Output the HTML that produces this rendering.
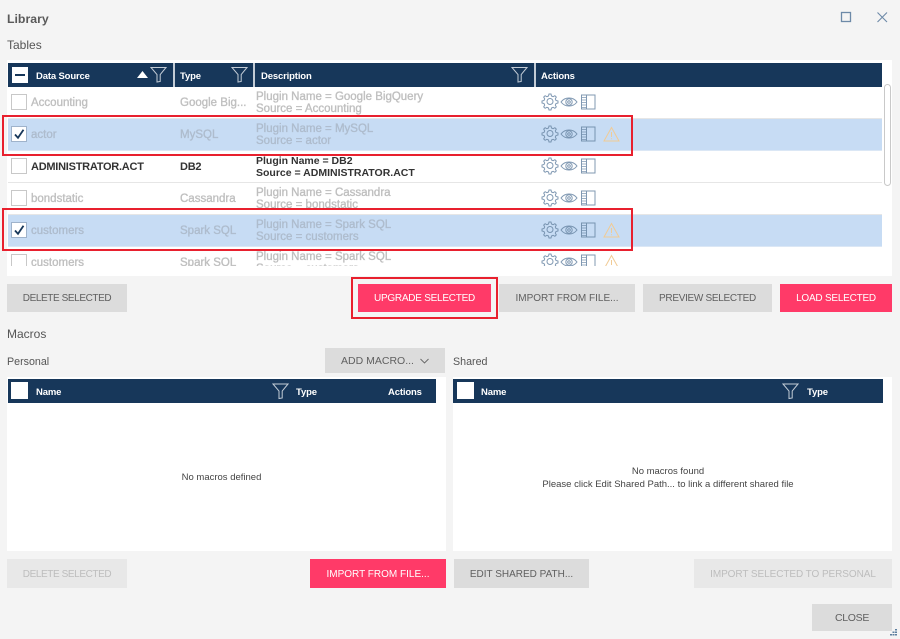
<!DOCTYPE html>
<html><head><meta charset="utf-8"><title>Library</title>
<style>
html,body{margin:0;padding:0}
html{background:#f4f4f4}
body{width:900px;height:639px;overflow:hidden;background:#f4f4f4;position:relative;font-family:"Liberation Sans",sans-serif;color:#555;filter:blur(.3px)}
.a{position:absolute;white-space:nowrap}
.p{position:absolute;background:#fff}
.hd{position:absolute;background:#17375a;height:24px}
.ht{position:absolute;color:#fff;font-weight:bold;font-size:9.5px;line-height:24px;white-space:nowrap;top:1.5px;letter-spacing:-.15px}
.sep{position:absolute;top:0;width:2px;height:24px;background:#c3ccd6}
.btn{position:absolute;display:flex;align-items:center;justify-content:center;font-size:10px;background:#dcdcdc;color:#606060;white-space:nowrap;padding-top:1px;box-sizing:border-box}
.pk{background:#ff3a68;color:#fff}
.dis{background:#e8e8e8;color:#bdbdbd}
.row{position:absolute;left:8px;width:874px;height:32px;border-bottom:1px solid #e6e6e6;box-sizing:border-box}
.sel{background:#c7dcf4;border-color:#dbe7f5}
.cb{position:absolute;left:3px;top:7px;width:14px;height:14px;border:1px solid #c8c8c8;background:#fff}
.sel .cb{border-color:#9fb3cb}
.t{position:absolute;font-size:11.5px;-webkit-text-stroke:.35px currentColor;color:#bfbfbf;line-height:14px;white-space:nowrap}
.sel .t{color:#aebccd}
.dk .t{color:#333;font-weight:bold;font-size:11px;-webkit-text-stroke:0;letter-spacing:-.25px}
.n{left:23px;top:9px}
.ty{left:172px;top:9px}
.t.d{left:248px;top:4px;line-height:12px}
.dk .t.d{font-size:10.5px;letter-spacing:0}
.ic{position:absolute;left:533px;top:6px;opacity:.85}
.red{position:absolute;border:2px solid #e8202e;box-sizing:border-box}
.msg{position:absolute;text-align:center;font-size:9.5px;line-height:13px;color:#444}
</style></head>
<body>
<svg width="0" height="0" style="position:absolute">
<symbol id="fn" viewBox="0 0 17 17"><path d="M1 1.500H16L10.200 8.500V15.500L7 16V8.500Z" fill="none" stroke="#c3ccd6" stroke-width="1"/></symbol>
<symbol id="ac" viewBox="0 0 80 18">
<g fill="none" stroke="#6a87a5" stroke-width="1">
<path d="M8 1.500h2l.5 2 1.600.7 1.800-1 1.400 1.400-1 1.800.7 1.600 2 .5v2l-2 .5-.7 1.600 1 1.800-1.400 1.400-1.800-1-1.600.7-.5 2H8l-.5-2-1.600-.7-1.800 1-1.400-1.400 1-1.800-.7-1.600-2-.5v-2l2-.5.7-1.600-1-1.800 1.400-1.400 1.800 1 1.600-.7z" transform="translate(0 -.5)"/>
<circle cx="9" cy="8.500" r="3"/>
<path d="M20 9c2-2.700 4.800-4 8-4s6 1.300 8 4c-2 2.700-4.800 4-8 4s-6-1.300-8-4z"/>
<circle cx="28" cy="9" r="3.200"/><circle cx="28" cy="9" r="1.300"/>
<path d="M40.500 2h13.500v14h-13.500zM45.500 2v14"/>
<path d="M40.500 4.500h5M40.500 7h5M40.500 9.500h5M40.500 12h5M40.500 14.500h5" stroke-width=".8"/>
</g></symbol>
<symbol id="wn" viewBox="0 0 17 16"><path d="M8.500 1.500L16 15H1Z M8.500 6v5 M8.500 12.200v1" fill="none" stroke="#f1cb95" stroke-width="1"/></symbol>
<symbol id="ck" viewBox="0 0 14 14"><path d="M3 7.500L6 10.800L11.500 2.800" fill="none" stroke="#17375a" stroke-width="1.800"/></symbol>
</svg>

<div class="a" style="left:7px;top:10.500px;font-size:12.300px;font-weight:bold;color:#5a5a5a;line-height:15px;padding-top:1px">Library</div>
<svg class="a" style="left:840px;top:11px" width="12" height="12"><rect x="1.500" y="1.500" width="9" height="9" fill="none" stroke="#6d8aa8" stroke-width="1.300"/></svg>
<svg class="a" style="left:876px;top:11px" width="12" height="12"><path d="M1.500 1.500L11 11M11 1.500L1.500 11" fill="none" stroke="#6d8aa8" stroke-width="1.100"/></svg>
<div class="a" style="left:7px;top:37.500px;font-size:12px;line-height:15px">Tables</div>

<div class="p" style="left:7px;top:60px;width:885px;height:216px"></div>
<div class="hd" style="left:8px;top:63px;width:874px">
<div style="position:absolute;left:4px;top:4px;width:16px;height:16px;background:#fff"><div style="position:absolute;left:3px;top:7px;width:10px;height:2px;background:#17375a"></div></div>
<div class="ht" style="left:28px">Data Source</div>
<svg style="position:absolute;left:129px;top:8px" width="11" height="7"><path d="M0 7L5.500 0L11 7Z" fill="#fff"/></svg>
<svg style="position:absolute;left:142px;top:3px" width="17" height="17"><use href="#fn"/></svg>
<div class="sep" style="left:165px"></div>
<div class="ht" style="left:172px">Type</div>
<svg style="position:absolute;left:223px;top:3px" width="17" height="17"><use href="#fn"/></svg>
<div class="sep" style="left:245px"></div>
<div class="ht" style="left:253px">Description</div>
<svg style="position:absolute;left:503px;top:3px" width="17" height="17"><use href="#fn"/></svg>
<div class="sep" style="left:526px"></div>
<div class="ht" style="left:533px">Actions</div>
</div>

<div style="position:absolute;left:0;top:0;width:900px;height:266px;overflow:hidden">
<div class="row" style="top:87px"><div class="cb"></div><div class="t n">Accounting</div><div class="t ty">Google Big...</div><div class="t d">Plugin Name = Google BigQuery<br>Source = Accounting</div><svg class="ic" width="80" height="18"><use href="#ac"/></svg></div>
<div class="row sel" style="top:119px"><div class="cb"><svg width="14" height="14" style="display:block"><use href="#ck"/></svg></div><div class="t n">actor</div><div class="t ty">MySQL</div><div class="t d">Plugin Name = MySQL<br>Source = actor</div><svg class="ic" width="80" height="18"><use href="#ac"/></svg><svg style="position:absolute;left:595px;top:7px" width="17" height="16"><use href="#wn"/></svg></div>
<div class="row dk" style="top:151px"><div class="cb"></div><div class="t n">ADMINISTRATOR.ACT</div><div class="t ty">DB2</div><div class="t d">Plugin Name = DB2<br>Source = ADMINISTRATOR.ACT</div><svg class="ic" width="80" height="18"><use href="#ac"/></svg></div>
<div class="row" style="top:183px"><div class="cb"></div><div class="t n">bondstatic</div><div class="t ty">Cassandra</div><div class="t d">Plugin Name = Cassandra<br>Source = bondstatic</div><svg class="ic" width="80" height="18"><use href="#ac"/></svg></div>
<div class="row sel" style="top:215px"><div class="cb"><svg width="14" height="14" style="display:block"><use href="#ck"/></svg></div><div class="t n">customers</div><div class="t ty">Spark SQL</div><div class="t d">Plugin Name = Spark SQL<br>Source = customers</div><svg class="ic" width="80" height="18"><use href="#ac"/></svg><svg style="position:absolute;left:595px;top:7px" width="17" height="16"><use href="#wn"/></svg></div>
<div class="row" style="top:247px;border:0"><div class="cb"></div><div class="t n">customers</div><div class="t ty">Spark SQL</div><div class="t d">Plugin Name = Spark SQL<br>Source = customers</div><svg class="ic" width="80" height="18"><use href="#ac"/></svg><svg style="position:absolute;left:595px;top:7px" width="17" height="16"><use href="#wn"/></svg></div>
</div>
<div class="a" style="left:884px;top:84px;width:7px;height:102px;box-sizing:border-box;border:1px solid #c9c9c9;border-radius:4px;background:#fff"></div>

<div class="red" style="left:2px;top:115px;width:631px;height:41px"></div>
<div class="red" style="left:2px;top:208px;width:631px;height:43px"></div>
<div class="red" style="left:351px;top:277px;width:147px;height:42px"></div>

<div class="btn" style="left:7px;top:284px;width:120px;height:28px;letter-spacing:-.4px">DELETE SELECTED</div>
<div class="btn pk" style="left:358px;top:284px;width:133px;height:28px;letter-spacing:-.25px">UPGRADE SELECTED</div>
<div class="btn" style="left:499px;top:284px;width:136px;height:28px">IMPORT FROM FILE...</div>
<div class="btn" style="left:643px;top:284px;width:129px;height:28px;letter-spacing:-.3px">PREVIEW SELECTED</div>
<div class="btn pk" style="left:780px;top:284px;width:112px;height:28px;letter-spacing:-.23px">LOAD SELECTED</div>

<div class="a" style="left:7px;top:326.500px;font-size:12px;line-height:15px">Macros</div>
<div class="a" style="left:7px;top:355px;font-size:10.700px;line-height:14px">Personal</div>
<div class="a" style="left:453px;top:355px;font-size:10.700px;line-height:14px">Shared</div>
<div class="btn" style="left:325px;top:348px;width:120px;height:25px;font-size:10.500px"><span>ADD MACRO...</span><svg style="margin-left:6px" width="9" height="6"><path d="M.5 1L4.500 5L8.500 1" fill="none" stroke="#666" stroke-width=".9"/></svg></div>

<div class="p" style="left:7px;top:377px;width:439px;height:174px"></div>
<div class="hd" style="left:8px;top:379px;width:428px">
<div style="position:absolute;left:3px;top:3px;width:17px;height:17px;background:#fff"></div>
<div class="ht" style="left:28px">Name</div>
<svg style="position:absolute;left:264px;top:2px" width="17" height="20"><use href="#fn"/></svg>
<div class="ht" style="left:288px">Type</div>
<div class="ht" style="left:380px">Actions</div>
</div>
<div class="msg" style="left:7px;top:471px;width:429px">No macros defined</div>

<div class="p" style="left:453px;top:377px;width:439px;height:174px"></div>
<div class="hd" style="left:453px;top:379px;width:430px">
<div style="position:absolute;left:4px;top:3px;width:17px;height:17px;background:#fff"></div>
<div class="ht" style="left:28px">Name</div>
<svg style="position:absolute;left:329px;top:2px" width="17" height="20"><use href="#fn"/></svg>
<div class="ht" style="left:354px">Type</div>
</div>
<div class="msg" style="left:453px;top:465px;width:430px">No macros found<br>Please click Edit Shared Path... to link a different shared file</div>

<div class="btn dis" style="left:7px;top:559px;width:120px;height:29px;letter-spacing:-.4px">DELETE SELECTED</div>
<div class="btn pk" style="left:310px;top:559px;width:136px;height:29px">IMPORT FROM FILE...</div>
<div class="btn" style="left:454px;top:559px;width:135px;height:29px">EDIT SHARED PATH...</div>
<div class="btn dis" style="left:694px;top:559px;width:198px;height:29px;letter-spacing:-.07px">IMPORT SELECTED TO PERSONAL</div>
<div class="btn" style="left:812px;top:604px;width:80px;height:27px;font-size:10.500px;letter-spacing:-.3px">CLOSE</div>
<svg class="a" style="left:888px;top:628px" width="10" height="9"><path d="M7 1h2v1.500H7zM4.500 3.500h2V5h-2zM7 3.500h2V5H7zM2 6h2v1.500H2zM4.500 6h2v1.500h-2zM7 6h2v1.500H7z" fill="#5d7f9f"/></svg>
</body></html>
